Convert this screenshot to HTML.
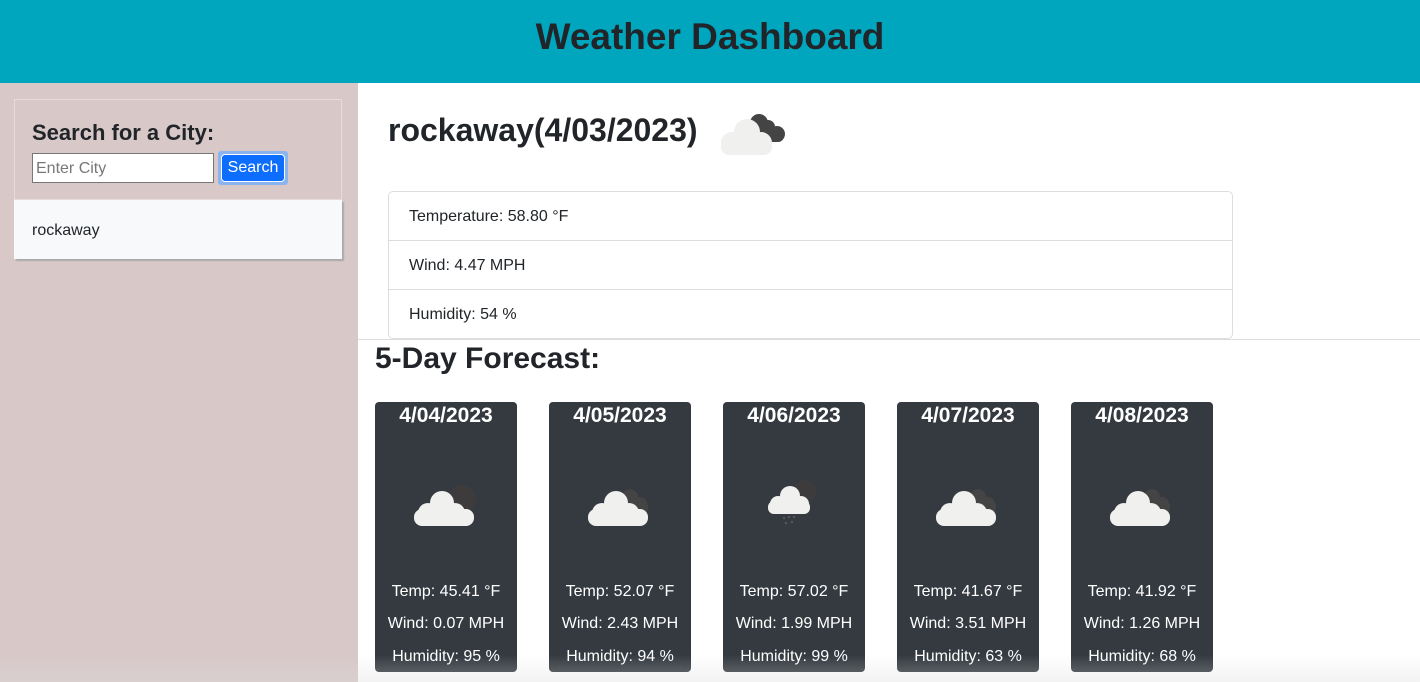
<!DOCTYPE html>
<html><head><style>
*{box-sizing:border-box;margin:0;padding:0}
body{width:1420px;height:682px;overflow:hidden;font-family:"Liberation Sans",Helvetica,Arial,sans-serif;color:#212529;background:#fff;position:relative}
header{height:83px;background:#00a6bd;text-align:center}
header h1{font-size:37px;font-weight:bold;line-height:74px;color:#212529}
.side{position:absolute;left:0;top:83px;width:358px;height:599px;background:#d8c8c8}
.sbox{position:absolute;left:14px;top:16px;width:328px;height:101px;border:1px solid #e6dcdc}
.sbox h2{position:absolute;left:17px;top:20px;font-size:22px;font-weight:bold}
.inp{position:absolute;left:17px;top:53px;width:182px;height:30px;background:#fff;border:1px solid #777;font-size:16px;color:#777;padding:6px 3px}
.btn{position:absolute;left:203px;top:51px;width:70px;height:34px;border:2px solid #8ab4f0;border-radius:3px;background:#8ab4f0}
.btn span{display:block;margin:1px;height:28px;background:#0d6efd;color:#fff;border:1px solid #fff;border-radius:4px;text-align:center;line-height:26px;font-size:16px}
.hist{position:absolute;left:14px;top:117px;width:328px;height:59px;background:#f8f9fa;box-shadow:2px 2px 1px #aaa;font-size:16px;padding:22px 18px}
.main h2{position:absolute;left:388px;top:112px;font-size:32px;font-weight:bold}
.list{position:absolute;left:388px;top:191px;width:845px;height:148px;border:1px solid #ddd;border-radius:5px}
.list div{height:49px;border-bottom:1px solid #ddd;padding:16px 20px;font-size:16px}
.list div:last-child{border:none}
.hr{position:absolute;left:358px;top:339px;width:1062px;border-top:1px solid #ddd}
.fh{position:absolute;left:375px;top:342px;font-size:30px;font-weight:bold}
.card{position:absolute;top:402px;width:142px;height:270px;background:#343a40;border-radius:4px;color:#fff;text-align:center}
.card .d{font-size:21px;font-weight:bold;margin-top:2px}
.card svg{position:absolute;left:35px;top:75px}
.card .t{position:absolute;left:0;width:100%;font-size:16px;top:181px}
.shade{position:absolute;left:0;top:655px;width:1420px;height:27px;background:linear-gradient(rgba(255,255,255,0),rgba(220,220,220,.35));pointer-events:none}
</style></head><body>
<header><h1>Weather Dashboard</h1></header>
<div class="side">
<div class="sbox"><h2>Search for a City:</h2><div class="inp">Enter City</div><div class="btn"><span>Search</span></div></div>
<div class="hist">rockaway</div>
</div>
<div class="main">
<h2>rockaway(4/03/2023)</h2>
<svg style="position:absolute;left:712px;top:105px" width="80" height="55" viewBox="0 0 80 55"><g fill="#444"><circle cx="47" cy="18" r="9"/><circle cx="56" cy="22" r="7"/><circle cx="65" cy="29" r="8"/><rect x="42" y="22" width="30" height="15" rx="6"/></g><g fill="#f0f0ef"><circle cx="35" cy="27" r="13"/><circle cx="20" cy="38" r="11"/><circle cx="49" cy="38" r="11"/><rect x="9" y="33" width="51" height="17" rx="8"/></g></svg>
<div class="list"><div>Temperature: 58.80 °F</div><div>Wind: 4.47 MPH</div><div>Humidity: 54 %</div></div>
<div class="hr"></div>
<div class="fh">5-Day Forecast:</div>
</div>
<div class="card" style="left:375px"><div class="d">4/04/2023</div><svg width="72" height="60" viewBox="0 0 72 60"><circle cx="52" cy="22" r="14" fill="#3e3b3c"/><g fill="#f0f0ef"><circle cx="32" cy="26" r="12"/><circle cx="18" cy="36" r="10"/><circle cx="45" cy="36" r="10"/><rect x="4" y="32" width="60" height="17" rx="8"/></g></svg><div class="t">Temp: 45.41 °F</div><div class="t" style="top:213px">Wind: 0.07 MPH</div><div class="t" style="top:246px">Humidity: 95 %</div></div>
<div class="card" style="left:549px"><div class="d">4/05/2023</div><svg width="72" height="60" viewBox="0 0 72 60"><g fill="#444"><circle cx="46" cy="20" r="8"/><circle cx="56" cy="27" r="7"/><rect x="42" y="23" width="22" height="14" rx="6"/></g><g fill="#f0f0ef"><circle cx="32" cy="26" r="12"/><circle cx="18" cy="36" r="10"/><circle cx="45" cy="36" r="10"/><rect x="4" y="32" width="60" height="17" rx="8"/></g></svg><div class="t">Temp: 52.07 °F</div><div class="t" style="top:213px">Wind: 2.43 MPH</div><div class="t" style="top:246px">Humidity: 94 %</div></div>
<div class="card" style="left:723px"><div class="d">4/06/2023</div><svg width="72" height="60" viewBox="0 0 72 60"><circle cx="47" cy="14" r="11" fill="#3e3b3c"/><g fill="#f0f0ef"><circle cx="32" cy="19" r="10"/><circle cx="20" cy="27" r="8"/><circle cx="43" cy="27" r="8"/><rect x="10" y="24" width="42" height="13" rx="6"/></g><g fill="#555"><circle cx="26" cy="41" r="1.3"/><circle cx="31" cy="40" r="1.3"/><circle cx="36" cy="40" r="1.3"/><circle cx="28" cy="46" r="1.3"/><circle cx="34" cy="45" r="1.3"/></g></svg><div class="t">Temp: 57.02 °F</div><div class="t" style="top:213px">Wind: 1.99 MPH</div><div class="t" style="top:246px">Humidity: 99 %</div></div>
<div class="card" style="left:897px"><div class="d">4/07/2023</div><svg width="72" height="60" viewBox="0 0 72 60"><g fill="#444"><circle cx="46" cy="20" r="8"/><circle cx="56" cy="27" r="7"/><rect x="42" y="23" width="22" height="14" rx="6"/></g><g fill="#f0f0ef"><circle cx="32" cy="26" r="12"/><circle cx="18" cy="36" r="10"/><circle cx="45" cy="36" r="10"/><rect x="4" y="32" width="60" height="17" rx="8"/></g></svg><div class="t">Temp: 41.67 °F</div><div class="t" style="top:213px">Wind: 3.51 MPH</div><div class="t" style="top:246px">Humidity: 63 %</div></div>
<div class="card" style="left:1071px"><div class="d">4/08/2023</div><svg width="72" height="60" viewBox="0 0 72 60"><g fill="#444"><circle cx="46" cy="20" r="8"/><circle cx="56" cy="27" r="7"/><rect x="42" y="23" width="22" height="14" rx="6"/></g><g fill="#f0f0ef"><circle cx="32" cy="26" r="12"/><circle cx="18" cy="36" r="10"/><circle cx="45" cy="36" r="10"/><rect x="4" y="32" width="60" height="17" rx="8"/></g></svg><div class="t">Temp: 41.92 °F</div><div class="t" style="top:213px">Wind: 1.26 MPH</div><div class="t" style="top:246px">Humidity: 68 %</div></div>
<div class="shade"></div>
</body></html>
